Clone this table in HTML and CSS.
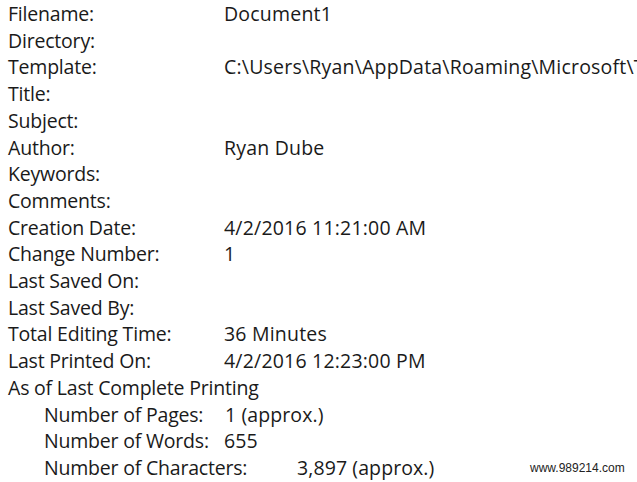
FILE: index.html
```html
<!DOCTYPE html>
<html>
<head>
<meta charset="utf-8">
<link rel="stylesheet" href="styles.css">
</head>
<body>
<div class="sheet">
  <div class="props">
    <div class="label">Filename:</div><div class="value">Document1</div>
    <div class="label">Directory:</div><div class="value"></div>
    <div class="label">Template:</div><div class="value">C:\Users\Ryan\AppData\Roaming\Microsoft\Templates\Normal.dotm</div>
    <div class="label">Title:</div><div class="value"></div>
    <div class="label">Subject:</div><div class="value"></div>
    <div class="label">Author:</div><div class="value">Ryan Dube</div>
    <div class="label">Keywords:</div><div class="value"></div>
    <div class="label">Comments:</div><div class="value"></div>
    <div class="label">Creation Date:</div><div class="value">4/2/2016 11:21:00 AM</div>
    <div class="label">Change Number:</div><div class="value">1</div>
    <div class="label">Last Saved On:</div><div class="value"></div>
    <div class="label">Last Saved By:</div><div class="value"></div>
    <div class="label">Total Editing Time:</div><div class="value">36 Minutes</div>
    <div class="label">Last Printed On:</div><div class="value">4/2/2016 12:23:00 PM</div>
  </div>
  <div class="section">As of Last Complete Printing</div>
  <div class="sub">
    <div class="row"><span class="k k-pages">Number of Pages:</span><span class="v">1 (approx.)</span></div>
    <div class="row"><span class="k k-words">Number of Words:</span><span class="v">655</span></div>
    <div class="row"><span class="k k-chars">Number of Characters:</span><span class="v">3,897 (approx.)</span></div>
  </div>
  <div class="watermark">www.989214.com</div>
</div>
</body>
</html>
```

FILE: styles.css
```css
html, body {
  margin: 0;
  padding: 0;
  background: #ffffff;
}
.sheet {
  position: relative;
  width: 637px;
  height: 482px;
  overflow: hidden;
  padding: 1px 0 0 8px;
  box-sizing: border-box;
  font-family: "Open Sans", sans-serif;
  font-size: 19.5px;
  letter-spacing: -0.2px;
  line-height: 26.7px;
  color: #1a1a1a;
}
.props {
  display: grid;
  grid-template-columns: 216px 1fr;
}
.value {
  white-space: nowrap;
  min-height: 26.7px;
  letter-spacing: 0.2px;
}
.sub {
  padding-left: 36px;
}
.row {
  display: flex;
  white-space: nowrap;
}
.v {
  letter-spacing: 0.1px;
}
.k-pages { width: 181px; }
.k-words { width: 180px; }
.k-chars { width: 253px; }
.watermark {
  position: absolute;
  left: 530px;
  top: 461px;
  font-family: "Liberation Sans", Arial, sans-serif;
  font-size: 12px;
  line-height: 14px;
  letter-spacing: 0;
  color: #222;
}
```
